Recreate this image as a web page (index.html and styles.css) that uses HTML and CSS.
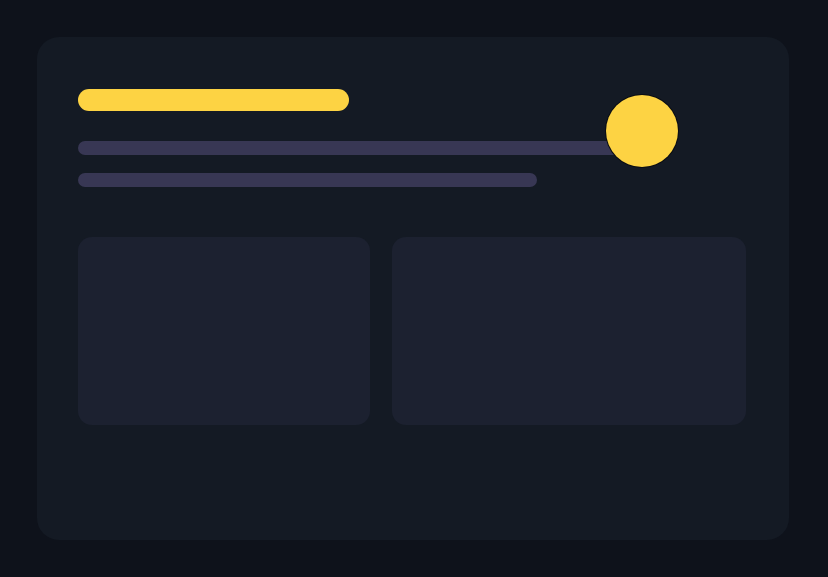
FILE: index.html
```html
<!DOCTYPE html>
<html>
<head>
    <meta name="viewport" content="width=device-width, initial-scale=1.0">
    <link rel="stylesheet" href="styles.css">
</head>
<body>

<div class="card">
    <div class="title-bar"></div>
    <div class="line line-long"></div>
    <div class="line line-short"></div>
    <div class="dot"></div>

    <div class="panels">
        <div class="panel"></div>
        <div class="panel"></div>
    </div>
</div>

</body>
</html>
```

FILE: styles.css
```css
body {
    margin: 0;
    padding: 37px 0 0 37px;
    background-color: #0e121b;
    font-family: "Liberation Sans", Arial, sans-serif;
    height: 577px;
    box-sizing: border-box;
    overflow: hidden;
}

.card {
    position: relative;
    width: 752px;
    height: 503px;
    box-sizing: border-box;
    padding: 52px 0 0 41px;
    background-color: #141a24;
    border-radius: 22px;
}

.title-bar {
    width: 271px;
    height: 22px;
    border-radius: 11px;
    background-color: #fdd343;
}

.line {
    height: 14px;
    border-radius: 7px;
    background-color: #383754;
}

.line-long {
    width: 560px;
    margin-top: 30px;
}

.line-short {
    width: 459px;
    margin-top: 18px;
}

/* yellow dot sits over the end of the long line */
.dot {
    position: absolute;
    left: 569px;
    top: 58px;
    width: 72px;
    height: 72px;
    border-radius: 50%;
    background-color: #fdd343;
    box-shadow: 0 0 0 1px #0b0d12;
}

.panels {
    display: grid;
    grid-template-columns: 292px 354px;
    gap: 22px;
    margin-top: 50px;
}

.panel {
    height: 188px;
    border-radius: 14px;
    background-color: #1c2130;
}
```
